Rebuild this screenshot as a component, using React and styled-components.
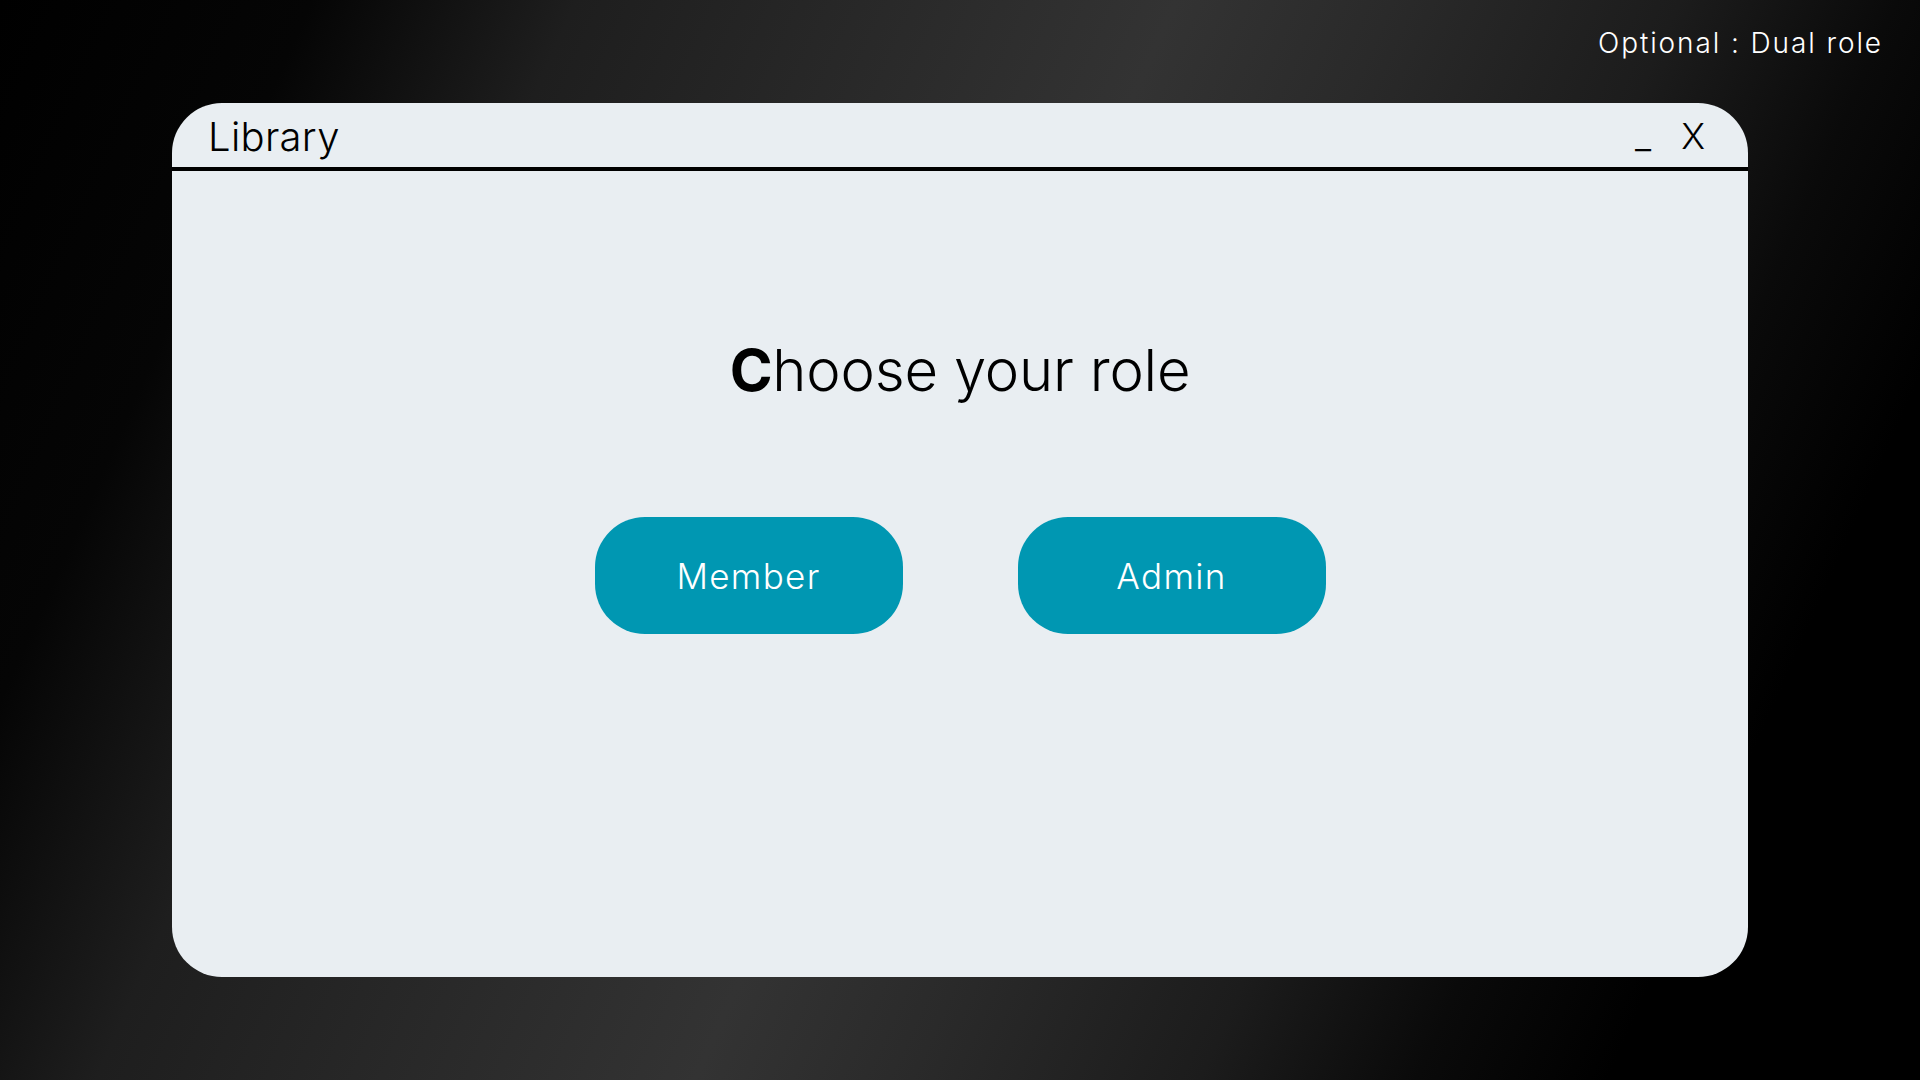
import styled, { createGlobalStyle } from "styled-components";

const GlobalStyle = createGlobalStyle`
  html, body {
    margin: 0;
    padding: 0;
  }
  body {
    font-family: "Inter", "Liberation Sans", sans-serif;
  }
`;

const App = () => {
  return (
    <>
      <GlobalStyle />
      <Page>
        <TopBar>
          <Note>Optional : Dual role</Note>
        </TopBar>
        <Window>
          <TitleBar>
            <Title>Library</Title>
            <Controls>
              <Control>_</Control>
              <Control>X</Control>
            </Controls>
          </TitleBar>
          <Body>
            <Heading>
              <Strong>C</Strong>hoose your role
            </Heading>
            <ButtonRow>
              <RoleButton>Member</RoleButton>
              <RoleButton>Admin</RoleButton>
            </ButtonRow>
          </Body>
        </Window>
      </Page>
    </>
  );
};

export default App;

const Page = styled.div`
  width: 1920px;
  height: 1080px;
  box-sizing: border-box;
  overflow: hidden;
  display: flex;
  flex-direction: column;
  align-items: center;
  background: linear-gradient(
    114deg,
    #000 0%,
    #050505 13%,
    #1e1e1e 24%,
    #333 49%,
    #2a2a2a 58%,
    #1c1c1c 70%,
    #0a0a0a 79%,
    #000 87%,
    #000 100%
  );
`;

const TopBar = styled.div`
  width: 100%;
  height: 103px;
  box-sizing: border-box;
  display: flex;
  justify-content: flex-end;
  padding: 29px 37px 0 0;
`;

const Note = styled.span`
  font-size: 28px;
  line-height: 1;
  font-weight: 300;
  color: #ffffff;
  letter-spacing: 1.9px;
`;

const Window = styled.div`
  width: 1576px;
  height: 874px;
  background: #e9eef2;
  border-radius: 50px;
  display: flex;
  flex-direction: column;
  overflow: hidden;
`;

const TitleBar = styled.div`
  height: 68px;
  box-sizing: border-box;
  display: flex;
  align-items: flex-end;
  justify-content: space-between;
  padding: 0 43px 10px 36px;
  border-bottom: 4px solid #000;
`;

const Title = styled.span`
  font-size: 40px;
  line-height: 1;
  font-weight: 300;
  color: #000;
  letter-spacing: 0.3px;
`;

const Controls = styled.div`
  display: flex;
  align-items: flex-end;
  gap: 30px;
  padding-bottom: 3px;
`;

const Control = styled.span`
  font-size: 36px;
  line-height: 1;
  font-weight: 300;
  color: #000;
`;

const Body = styled.div`
  flex: 1;
  display: flex;
  flex-direction: column;
  align-items: center;
  padding-top: 170px;
`;

const Heading = styled.h1`
  margin: 0;
  font-size: 58px;
  line-height: 1;
  font-weight: 300;
  color: #000;
  letter-spacing: -0.2px;
`;

const Strong = styled.span`
  font-weight: 700;
`;

const ButtonRow = styled.div`
  display: flex;
  gap: 115px;
  margin-top: 118px;
`;

const RoleButton = styled.button`
  width: 308px;
  height: 117px;
  border: none;
  border-radius: 50px;
  background: #0097b2;
  color: #ffffff;
  font-family: "Inter", "Liberation Sans", sans-serif;
  font-size: 35px;
  font-weight: 300;
  letter-spacing: 1.3px;
  cursor: pointer;
  transition: opacity 0.3s ease;

  &:hover {
    opacity: 0.9;
  }
`;
